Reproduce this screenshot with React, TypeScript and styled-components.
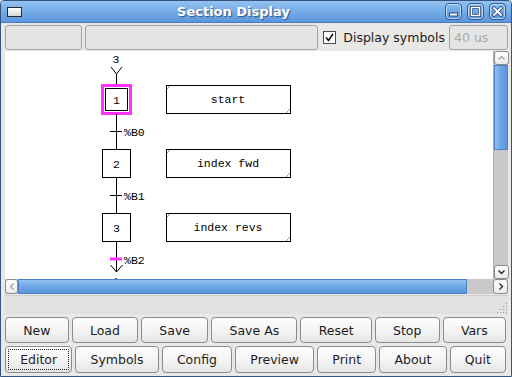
import styled, { createGlobalStyle } from 'styled-components'

const GlobalStyle = createGlobalStyle`
  html, body {
    margin: 0;
    padding: 0;
    background: #e8e8e7;
  }
  body {
    font-family: "DejaVu Sans", "Noto Sans", sans-serif;
    font-size: 12.5px;
    color: #1c1c1c;
  }
`

const Frame = styled.div`
  width: 512px;
  height: 377px;
  box-sizing: border-box;
  border: 1px solid #34557f;
  border-radius: 4px 4px 0 0;
  background: #e8e8e7;
  display: flex;
  flex-direction: column;
  overflow: hidden;
`

const TitleBar = styled.div`
  height: 21px;
  flex: none;
  display: flex;
  align-items: center;
  padding: 0 5px 0 6px;
  background: linear-gradient(#93c2f1, #78afe9 45%, #5b96dc);
  border-bottom: 1px solid #4a7dbd;
`

const WinIcon = styled.div`
  width: 13px;
  height: 8px;
  border: 1px solid #2b2b2b;
  background: linear-gradient(#ffffff, #d6d6d6);
`

const Title = styled.div`
  flex: 1;
  text-align: center;
  color: #fff;
  font-weight: bold;
  font-size: 13px;
  text-shadow: 1px 1px 1px #2d5790;
`

const TitleButtons = styled.div`
  display: flex;
  gap: 5px;
`

const TitleButton = styled.div`
  width: 15px;
  height: 15px;
  border: 1px solid #2f5b94;
  border-radius: 4px;
  background: linear-gradient(#86b9ee, #5b95db);
  box-shadow: inset 0 0 0 1px rgba(255, 255, 255, 0.55);
  display: flex;
  align-items: center;
  justify-content: center;
`

const Body = styled.div`
  flex: 1;
  display: flex;
  flex-direction: column;
  padding: 2px 3px 0 4px;
`

const Toolbar = styled.div`
  height: 25px;
  display: flex;
  align-items: center;
  gap: 3px;
  margin-bottom: 1px;
`

const Field = styled.div<{ $w?: number; $grow?: boolean }>`
  box-sizing: border-box;
  height: 25px;
  width: ${(p) => (p.$w ? `${p.$w}px` : 'auto')};
  flex: ${(p) => (p.$grow ? '1' : 'none')};
  border: 1px solid #a4a4a4;
  border-radius: 3px;
  background: #e5e5e5;
  color: #a9a9a9;
  display: flex;
  align-items: center;
  padding-left: 4px;
`

const CheckBox = styled.div`
  width: 11px;
  height: 11px;
  margin: 0 4px 0 2px;
  border: 1px solid #4a4a4a;
  background: #fff;
  display: flex;
  align-items: center;
  justify-content: center;
`

const CheckLabel = styled.span`
  margin-right: 1px;
  white-space: nowrap;
`

const ScrollView = styled.div`
  display: grid;
  grid-template-columns: 1fr 15px;
  grid-template-rows: 228px 15px;
`

const Canvas = styled.div`
  background: #fff;
  overflow: hidden;
  svg {
    display: block;
  }
`

const VScroll = styled.div`
  display: flex;
  flex-direction: column;
  background: #c9c9c9;
  border-left: 1px solid #b0b0b0;
`

const HScroll = styled.div`
  grid-column: 1 / span 2;
  display: flex;
  background: #c9c9c9;
`

const ArrowBtn = styled.div<{ $w?: number; $h?: number }>`
  box-sizing: border-box;
  width: ${(p) => p.$w ?? 15}px;
  height: ${(p) => p.$h ?? 14}px;
  flex: none;
  border: 1px solid #8c8c8c;
  border-radius: 3px;
  background: linear-gradient(#ffffff, #e9e9e9);
  display: flex;
  align-items: center;
  justify-content: center;
`

const VThumb = styled.div`
  height: 85px;
  box-sizing: border-box;
  border: 1px solid #4c82c4;
  background: linear-gradient(90deg, #8fc0f1, #6aa3e4 50%, #5d97dc);
`

const HThumb = styled.div`
  width: 449px;
  box-sizing: border-box;
  border: 1px solid #4c82c4;
  background: linear-gradient(#93c3f2, #6fa7e6 50%, #5b95da);
`

const Spacer = styled.div`
  flex: 1;
`

const StatusBar = styled.div`
  height: 18px;
  margin-top: 1px;
  background: #e1e1e0;
  border-top: 1px solid #cfcfcf;
  display: flex;
  justify-content: flex-end;
  align-items: flex-end;
`

const ButtonRow = styled.div<{ $h: number }>`
  display: flex;
  gap: 3px;
  height: ${(p) => p.$h}px;
  margin: 3px 2px 0 0;
`

const Button = styled.div<{ $focus?: boolean }>`
  flex: 1 1 auto;
  box-sizing: border-box;
  padding: 0 2px;
  border: 1px solid #8b8b8b;
  border-radius: 4px;
  background: linear-gradient(#fefefe, #f3f3f3 55%, #e6e6e6);
  display: flex;
  align-items: center;
  justify-content: center;
  white-space: nowrap;
  outline: ${(p) => (p.$focus ? '1px dotted #222' : 'none')};
  outline-offset: -4px;
`

const row1 = ['New', 'Load', 'Save', 'Save As', 'Reset', 'Stop', 'Vars']
const row2 = ['Editor', 'Symbols', 'Config', 'Preview', 'Print', 'About', 'Quit']

const mono = '"Liberation Mono", "DejaVu Sans Mono", monospace'

function Step({ y, n, active }: { y: number; n: string; active?: boolean }) {
  return (
    <g>
      {active && (
        <>
          <rect x={101} y={y - 1} width={31} height={31} fill="#ff33ff" />
          <rect x={104} y={y + 2} width={25} height={25} fill="#fff" />
          <rect x={105.5} y={y + 3.5} width={22} height={22} fill="none" stroke="#000" />
        </>
      )}
      {!active && <rect x={102.5} y={y + 0.5} width={28} height={28} fill="none" stroke="#000" />}
      <text x={116.5} y={y + 15} textAnchor="middle" dominantBaseline="central" fontFamily={mono} fontSize={11.5}>
        {n}
      </text>
    </g>
  )
}

function Action({ y, label }: { y: number; label: string }) {
  return (
    <g>
      <rect x={166.5} y={y + 0.5} width={124} height={28} fill="none" stroke="#000" />
      <line x1={167} y1={y + 4} x2={170} y2={y + 1} stroke="#8c8cf0" />
      <line x1={286} y1={y + 28} x2={290} y2={y + 24} stroke="#8c8cf0" />
      <text x={228} y={y + 14} textAnchor="middle" dominantBaseline="central" fontFamily={mono} fontSize={11.5}>
        {label}
      </text>
    </g>
  )
}

function Transition({ y, label, active }: { y: number; label: string; active?: boolean }) {
  return (
    <g>
      {active ? (
        <rect x={110} y={y - 1.5} width={12} height={3} fill="#ff33ff" />
      ) : (
        <line x1={110} y1={y + 0.5} x2={122} y2={y + 0.5} stroke="#000" />
      )}
      <text x={124} y={y + 1} dominantBaseline="central" fontFamily={mono} fontSize={11.5}>
        {label}
      </text>
    </g>
  )
}

function Grafcet() {
  return (
    <svg width={488} height={228} viewBox="5 51 488 228">
      <text x={116} y={63} textAnchor="middle" fontFamily={mono} fontSize={11.5}>
        3
      </text>
      <path d="M111 67 L116.5 74 L122 67" fill="none" stroke="#000" />
      <line x1={116.5} y1={74} x2={116.5} y2={84} stroke="#000" />
      <Step y={85} n="1" active />
      <Action y={85} label="start" />
      <line x1={116.5} y1={114} x2={116.5} y2={149} stroke="#000" />
      <Transition y={131} label="%B0" />
      <Step y={149} n="2" />
      <Action y={149} label="index fwd" />
      <line x1={116.5} y1={177} x2={116.5} y2={213} stroke="#000" />
      <Transition y={195} label="%B1" />
      <Step y={213} n="3" />
      <Action y={213} label="index revs" />
      <line x1={116.5} y1={241} x2={116.5} y2={272} stroke="#000" />
      <Transition y={259} label="%B2" active />
      <path d="M110.5 265 L116.5 272 L122.5 265" fill="none" stroke="#000" />
      <text x={116} y={285} textAnchor="middle" fontFamily={mono} fontSize={11.5}>
        1
      </text>
    </svg>
  )
}

export default function App() {
  return (
    <>
      <GlobalStyle />
      <Frame>
        <TitleBar>
          <WinIcon />
          <Title>Section Display</Title>
          <TitleButtons>
            <TitleButton>
              <svg width="11" height="11" viewBox="0 0 11 11">
                <rect x="1.5" y="7" width="8" height="3" fill="#fff" stroke="#2b4f80" strokeWidth="1" />
              </svg>
            </TitleButton>
            <TitleButton>
              <svg width="11" height="11" viewBox="0 0 11 11">
                <rect x="1.5" y="1.5" width="8" height="8" fill="none" stroke="#2b4f80" strokeWidth="3" />
                <rect x="1.5" y="1.5" width="8" height="8" fill="none" stroke="#fff" strokeWidth="1.4" />
              </svg>
            </TitleButton>
            <TitleButton>
              <svg width="11" height="11" viewBox="0 0 11 11">
                <path d="M2 2 L9 9 M9 2 L2 9" stroke="#2b4f80" strokeWidth="3.6" strokeLinecap="round" />
                <path d="M2 2 L9 9 M9 2 L2 9" stroke="#fff" strokeWidth="1.8" strokeLinecap="round" />
              </svg>
            </TitleButton>
          </TitleButtons>
        </TitleBar>
        <Body>
          <Toolbar>
            <Field $w={77} />
            <Field $grow />
            <CheckBox>
              <svg width="9" height="9" viewBox="0 0 9 9">
                <path d="M1 4.5 L3.5 7.5 L8 1" fill="none" stroke="#111" strokeWidth="1.6" />
              </svg>
            </CheckBox>
            <CheckLabel>Display symbols</CheckLabel>
            <Field $w={59}>40 us</Field>
          </Toolbar>
          <ScrollView>
            <Canvas>
              <Grafcet />
            </Canvas>
            <VScroll>
              <ArrowBtn>
                <svg width="9" height="6" viewBox="0 0 9 6">
                  <path d="M1.5 4.5 L4.5 1.5 L7.5 4.5" fill="none" stroke="#9a9a9a" strokeWidth="1.2" />
                </svg>
              </ArrowBtn>
              <VThumb />
              <Spacer />
              <ArrowBtn>
                <svg width="9" height="6" viewBox="0 0 9 6">
                  <path d="M1.5 1.5 L4.5 4.5 L7.5 1.5" fill="none" stroke="#222" strokeWidth="1.3" />
                </svg>
              </ArrowBtn>
            </VScroll>
            <HScroll>
              <ArrowBtn $w={13} $h={15}>
                <svg width="6" height="9" viewBox="0 0 6 9">
                  <path d="M4.5 1.5 L1.5 4.5 L4.5 7.5" fill="none" stroke="#a0a0a0" strokeWidth="1.2" />
                </svg>
              </ArrowBtn>
              <HThumb />
              <Spacer />
              <ArrowBtn $h={15}>
                <svg width="6" height="9" viewBox="0 0 6 9">
                  <path d="M1.5 1.5 L4.5 4.5 L1.5 7.5" fill="none" stroke="#222" strokeWidth="1.3" />
                </svg>
              </ArrowBtn>
            </HScroll>
          </ScrollView>
          <StatusBar>
            <svg width="12" height="12" viewBox="0 0 12 12">
              {[
                [10, 2], [10, 5], [7, 5], [10, 8], [7, 8], [4, 8], [10, 11], [7, 11], [4, 11], [1, 11],
              ].map(([x, y], i) => (
                <rect key={i} x={x} y={y - 1} width={1} height={1} fill="#9d9d9d" />
              ))}
            </svg>
          </StatusBar>
          <ButtonRow $h={26}>
            {row1.map((b) => (
              <Button key={b}>{b}</Button>
            ))}
          </ButtonRow>
          <ButtonRow $h={27}>
            {row2.map((b) => (
              <Button key={b} $focus={b === 'Editor'}>
                {b}
              </Button>
            ))}
          </ButtonRow>
        </Body>
      </Frame>
    </>
  )
}
